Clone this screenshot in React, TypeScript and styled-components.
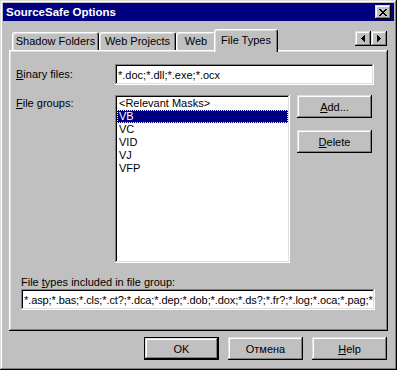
import styled, { createGlobalStyle } from "styled-components";

const GlobalStyle = createGlobalStyle`
  html, body {
    margin: 0;
    padding: 0;
    background: #c0c0c0;
  }
  body {
    font-family: "Liberation Sans", Arial, sans-serif;
    font-size: 11px;
    color: #000;
  }
`;

const raised = `
  box-shadow: inset -1px -1px #000, inset 1px 1px #dfdfdf,
    inset -2px -2px #808080, inset 2px 2px #fff;
`;

const sunken = `
  box-shadow: inset -1px -1px #fff, inset 1px 1px #808080,
    inset -2px -2px #dfdfdf, inset 2px 2px #000;
`;

const Window = styled.div`
  width: 397px;
  height: 370px;
  box-sizing: border-box;
  padding: 3px;
  background: #c0c0c0;
  display: flex;
  flex-direction: column;
  box-shadow: inset -1px -1px #000, inset 1px 1px #dfdfdf,
    inset -2px -2px #808080, inset 2px 2px #fff;
`;

const TitleBar = styled.div`
  height: 18px;
  background: #000080;
  color: #fff;
  display: flex;
  align-items: center;
  justify-content: space-between;
  padding: 0 3px 0 3px;
  font-weight: bold;
  font-size: 11.5px;
`;

const CloseButton = styled.div`
  width: 16px;
  height: 14px;
  background: #c0c0c0;
  display: flex;
  align-items: center;
  justify-content: center;
  ${raised}
`;

const Body = styled.div`
  padding: 8px 6px 0 6px;
  display: flex;
  flex-direction: column;
`;

const TabRow = styled.div`
  height: 21px;
  display: flex;
  align-items: flex-end;
  padding-left: 3px;
  position: relative;
  z-index: 1;
`;

const Tab = styled.div<{ $w: number; $active?: boolean }>`
  width: ${({ $w }) => $w}px;
  height: ${({ $active }) => ($active ? 23 : 18)}px;
  margin: ${({ $active }) => ($active ? "0 -2px -2px -2px" : "0")};
  box-sizing: border-box;
  background: #c0c0c0;
  border-top: 1px solid #fff;
  border-left: 1px solid #fff;
  border-right: 1px solid #000;
  border-radius: 3px 3px 0 0;
  box-shadow: inset -1px 0 #808080, inset 1px 1px #dfdfdf;
  display: flex;
  justify-content: center;
  padding-top: ${({ $active }) => ($active ? 4 : 2)}px;
  position: relative;
  z-index: ${({ $active }) => ($active ? 2 : 1)};
`;

const ScrollArrows = styled.div`
  margin-left: auto;
  margin-right: 1px;
  align-self: flex-start;
  margin-top: 2px;
  display: flex;
`;

const ArrowButton = styled.div`
  width: 16px;
  height: 15px;
  background: #c0c0c0;
  display: flex;
  align-items: center;
  justify-content: center;
  ${raised}
`;

const Panel = styled.div`
  height: 281px;
  box-sizing: border-box;
  padding: 14px 14px 0 7px;
  background: #c0c0c0;
  display: flex;
  flex-direction: column;
  box-shadow: inset -1px -1px #000, inset 1px 1px #fff,
    inset -2px -2px #808080, inset 2px 2px #dfdfdf;
`;

const Row = styled.div<{ $top?: number; $center?: boolean }>`
  display: flex;
  align-items: ${({ $center }) => ($center ? "center" : "flex-start")};
  margin-top: ${({ $top }) => $top ?? 0}px;
`;

const Label = styled.div<{ $pad?: number }>`
  width: 99px;
  flex-shrink: 0;
  line-height: 13px;
  padding-top: ${({ $pad }) => $pad ?? 0}px;
`;

const TextBox = styled.div<{ $tight?: boolean }>`
  flex: 1 0 auto;
  height: 21px;
  box-sizing: border-box;
  background: #fff;
  padding: 0 3px;
  display: flex;
  align-items: center;
  white-space: nowrap;
  overflow: hidden;
  letter-spacing: ${({ $tight }) => ($tight ? "-0.1px" : "normal")};
  ${sunken}
`;

const ListBox = styled.div`
  width: 175px;
  height: 168px;
  box-sizing: border-box;
  background: #fff;
  padding: 2px;
  ${sunken}
`;

const ListItem = styled.div<{ $selected?: boolean }>`
  height: 13px;
  line-height: 13px;
  padding-left: 2px;
  background: ${({ $selected }) => ($selected ? "#000080" : "transparent")};
  color: ${({ $selected }) => ($selected ? "#fff" : "#000")};
  outline: ${({ $selected }) => ($selected ? "1px dotted #ffff80" : "none")};
  outline-offset: -1px;
`;

const ButtonColumn = styled.div`
  margin-left: 7px;
  display: flex;
  flex-direction: column;
  gap: 12px;
`;

const Button = styled.div<{ $default?: boolean }>`
  width: 75px;
  height: 23px;
  box-sizing: border-box;
  background: #c0c0c0;
  display: flex;
  align-items: center;
  justify-content: center;
  border: ${({ $default }) => ($default ? "1px solid #000" : "none")};
  ${raised}
`;

const GroupSection = styled.div`
  margin: 13px -1px 0 5px;
  display: flex;
  flex-direction: column;
`;

const GroupLabel = styled.div`
  line-height: 13px;
  height: 13px;
`;

const Footer = styled.div`
  margin-top: 6px;
  padding-right: 1px;
  display: flex;
  justify-content: flex-end;
  gap: 9px;
`;

function CloseGlyph() {
  const rows = [
    [0, 1, 6, 7],
    [1, 2, 5, 6],
    [2, 3, 4, 5],
    [3, 4],
    [2, 3, 4, 5],
    [1, 2, 5, 6],
    [0, 1, 6, 7],
  ];
  return (
    <svg width="8" height="7" viewBox="0 0 8 7" shapeRendering="crispEdges">
      {rows.map((cols, y) =>
        cols.map((x) => <rect key={`${x}-${y}`} x={x} y={y} width="1" height="1" fill="#000" />)
      )}
    </svg>
  );
}

function LeftArrow() {
  return (
    <svg width="4" height="7" viewBox="0 0 4 7" shapeRendering="crispEdges">
      <path d="M3 0h1v7h-1zM2 1h1v5h-1zM1 2h1v3h-1zM0 3h1v1h-1z" fill="#000" />
    </svg>
  );
}

function RightArrow() {
  return (
    <svg width="4" height="7" viewBox="0 0 4 7" shapeRendering="crispEdges">
      <path d="M0 0h1v7h-1zM1 1h1v5h-1zM2 2h1v3h-1zM3 3h1v1h-1z" fill="#000" />
    </svg>
  );
}

const groups = ["<Relevant Masks>", "VB", "VC", "VID", "VJ", "VFP"];

export default function App() {
  return (
    <>
      <GlobalStyle />
      <Window>
        <TitleBar>
          <span>SourceSafe Options</span>
          <CloseButton>
            <CloseGlyph />
          </CloseButton>
        </TitleBar>
        <Body>
          <TabRow>
            <Tab $w={87}>Shadow Folders</Tab>
            <Tab $w={77}>Web Projects</Tab>
            <Tab $w={40}>Web</Tab>
            <Tab $w={64} $active>
              File Types
            </Tab>
            <ScrollArrows>
              <ArrowButton>
                <LeftArrow />
              </ArrowButton>
              <ArrowButton>
                <RightArrow />
              </ArrowButton>
            </ScrollArrows>
          </TabRow>
          <Panel>
            <Row $center>
              <Label>
                <u>B</u>inary files:
              </Label>
              <TextBox>*.doc;*.dll;*.exe;*.ocx</TextBox>
            </Row>
            <Row $top={10}>
              <Label $pad={2}>
                <u>F</u>ile groups:
              </Label>
              <ListBox>
                {groups.map((g) => (
                  <ListItem key={g} $selected={g === "VB"}>
                    {g}
                  </ListItem>
                ))}
              </ListBox>
              <ButtonColumn>
                <Button>
                  <span>
                    <u>A</u>dd...
                  </span>
                </Button>
                <Button>
                  <span>
                    <u>D</u>elete
                  </span>
                </Button>
              </ButtonColumn>
            </Row>
            <GroupSection>
              <GroupLabel>
                File <u>t</u>ypes included in file group:
              </GroupLabel>
              <TextBox $tight>
                *.asp;*.bas;*.cls;*.ct?;*.dca;*.dep;*.dob;*.dox;*.ds?;*.fr?;*.log;*.oca;*.pag;*
              </TextBox>
            </GroupSection>
          </Panel>
          <Footer>
            <Button $default>OK</Button>
            <Button>Отмена</Button>
            <Button>
              <span>
                <u>H</u>elp
              </span>
            </Button>
          </Footer>
        </Body>
      </Window>
    </>
  );
}
